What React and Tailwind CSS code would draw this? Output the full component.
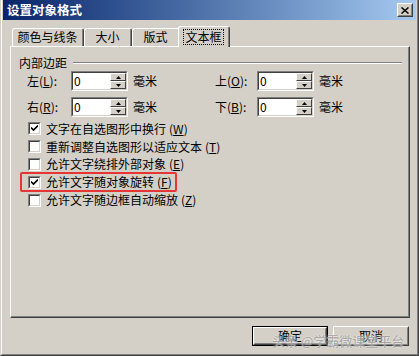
import React from 'react';

const raised =
  'border border-t-white border-l-white border-r-[#404040] border-b-[#404040]';
const raisedInner =
  'border border-t-[#d4d0c8] border-l-[#d4d0c8] border-r-[#808080] border-b-[#808080]';
const sunken =
  'border border-t-[#808080] border-l-[#808080] border-r-white border-b-white';
const sunkenInner =
  'border border-t-[#404040] border-l-[#404040] border-r-[#d4d0c8] border-b-[#d4d0c8]';

function Key({ k }) {
  return (
    <span>
      (<span className="underline underline-offset-1">{k}</span>)
    </span>
  );
}

function Tab({ label, w, selected }) {
  if (selected) {
    return (
      <div
        className="relative z-10 -mb-px -ml-[2px] h-[21px] shrink-0 rounded-t-[3px] border border-b-0 border-t-white border-l-white border-r-[#404040] bg-[#d4d0c8]"
        style={{ width: w }}
      >
        <div className="flex h-full items-start justify-center border-r border-r-[#808080] pt-[2px]">
          <span className="border border-dotted border-black px-[1px] leading-[14px]">
            {label}
          </span>
        </div>
      </div>
    );
  }
  return (
    <div
      className="h-[18px] shrink-0 rounded-t-[3px] border border-b-0 border-t-white border-l-white border-r-[#404040] bg-[#d4d0c8]"
      style={{ width: w }}
    >
      <div className="flex h-full items-start justify-center border-r border-r-[#808080] pt-[1px] leading-[14px]">
        {label}
      </div>
    </div>
  );
}

function Spin() {
  return (
    <div className="flex h-full w-[16px] flex-col">
      {['up', 'down'].map((d) => (
        <div key={d} className={`flex-1 ${raised} flex items-center justify-center bg-[#d4d0c8]`}>
          <svg width="5" height="3" viewBox="0 0 5 3">
            {d === 'up' ? (
              <path d="M2.5 0 L5 3 L0 3 Z" fill="#000" />
            ) : (
              <path d="M0 0 L5 0 L2.5 3 Z" fill="#000" />
            )}
          </svg>
        </div>
      ))}
    </div>
  );
}

function NumInput() {
  return (
    <div className={`h-[20px] w-[57px] shrink-0 ${sunken}`}>
      <div className={`flex h-full ${sunkenInner} bg-white`}>
        <span className="flex-1 pl-[1px] text-[12px] leading-[16px]">0</span>
        <Spin />
      </div>
    </div>
  );
}

function Check({ checked }) {
  return (
    <div className={`h-[13px] w-[13px] shrink-0 ${sunken}`}>
      <div className={`flex h-full items-center justify-center ${sunkenInner} bg-white`}>
        {checked && (
          <svg width="7" height="7" viewBox="0 0 7 7">
            <path d="M0 2.5 L2.5 5 L7 0.5" stroke="#000" strokeWidth="1.6" fill="none" />
          </svg>
        )}
      </div>
    </div>
  );
}

const options = [
  { text: '文字在自选图形中换行', k: 'W', checked: true },
  { text: '重新调整自选图形以适应文本', k: 'T', checked: false },
  { text: '允许文字绕排外部对象', k: 'E', checked: false },
  { text: '允许文字随对象旋转', k: 'F', checked: true, marked: true },
  { text: '允许文字随边框自动缩放', k: 'Z', checked: false },
];

export default function App() {
  return (
    <div className="relative h-[356px] w-[419px] overflow-hidden bg-[#d4d0c8] font-['Noto_Sans_CJK_SC','Noto_Sans',sans-serif] text-[12px] text-black">
      <div className="flex h-full flex-col border-l border-b border-r border-l-[#d4d0c8] border-b-[#404040] border-r-[#404040]">
        <div className="flex h-full flex-col border-l border-b border-r border-l-white border-b-[#808080] border-r-[#808080] px-[1px]">
          {/* title bar */}
          <div className="flex h-[20px] items-center justify-between bg-linear-to-r from-[#0a246a] to-[#a6caf0] pl-[4px] pr-[3px]">
            <span className="text-[12.5px] font-bold leading-none text-white">设置对象格式</span>
            <div className={`h-[14px] w-[16px] ${raised} bg-[#d4d0c8]`}>
              <div className={`flex h-full items-center justify-center ${raisedInner}`}>
                <svg width="8" height="7" viewBox="0 0 8 7">
                  <path d="M0.5 0.5 L7.5 6.5 M7.5 0.5 L0.5 6.5" stroke="#000" strokeWidth="1.5" />
                </svg>
              </div>
            </div>
          </div>

          {/* tabs + panel */}
          <div className="flex flex-col pl-[7px] pr-[6px]">
            <div className="mt-[5px] flex h-[21px] items-end pl-[2px]">
              <Tab label="颜色与线条" w={72} />
              <Tab label="大小" w={48} />
              <Tab label="版式" w={48} />
              <Tab label="文本框" w={52} selected />
            </div>
            <div className="h-[272px] border border-t-white border-l-white border-r-[#404040] border-b-[#404040]">
              <div className="h-full border-r border-b border-r-[#808080] border-b-[#808080] pt-[9px]">
                <div className="flex items-center pl-[8px] pr-[6px]">
                  <span className="leading-[14px]">内部边距</span>
                  <div className="ml-[6px] h-[2px] flex-1 border-t border-b border-t-[#808080] border-b-white" />
                </div>

                <div className="mt-[1px] flex flex-col gap-[6px]">
                  {[
                    ['左', 'L', '上', 'O'],
                    ['右', 'R', '下', 'B'],
                  ].map(([a, ak, b, bk]) => (
                    <div key={a} className="flex items-center pl-[16px]">
                      <span className="w-[44px] leading-[14px]">
                        {a}
                        <Key k={ak} />:
                      </span>
                      <NumInput />
                      <span className="ml-[5px] w-[82px]">毫米</span>
                      <span className="w-[42px] leading-[14px]">
                        {b}
                        <Key k={bk} />:
                      </span>
                      <NumInput />
                      <span className="ml-[5px]">毫米</span>
                    </div>
                  ))}
                </div>

                <div className="mt-[3px] flex flex-col pl-[17px]">
                  {options.map((o) => (
                    <div key={o.k} className="relative flex h-[17.8px] items-center">
                      <Check checked={o.checked} />
                      <span className="ml-[5px] text-[12px] leading-none">
                        {o.text}
                        <span className="ml-[3px]">
                          <Key k={o.k} />
                        </span>
                      </span>
                      {o.marked && (
                        <div className="absolute left-[-8px] top-[-1px] h-[20px] w-[157px] rounded-[2px] border-2 border-[#e53535]" />
                      )}
                    </div>
                  ))}
                </div>
              </div>
            </div>

            {/* buttons */}
            <div className="mt-[8px] flex justify-end gap-[5px] pr-[1px]">
              <div className="h-[20px] w-[76px] border border-black">
                <div className={`h-full ${raised}`}>
                  <div className={`flex h-full items-center justify-center ${raisedInner} leading-none`}>
                    确定
                  </div>
                </div>
              </div>
              <div className={`h-[20px] w-[76px] ${raised}`}>
                <div className={`flex h-full items-center justify-center ${raisedInner} leading-none`}>
                  取消
                </div>
              </div>
            </div>
          </div>
        </div>
      </div>

      {/* watermark */}
      <div className="absolute left-[272px] top-[334px] text-[13px] leading-none text-[#9a9a9a]/90 [text-shadow:0_0_2px_white]">
        头条 @学霸微课堂平台
      </div>
    </div>
  );
}
